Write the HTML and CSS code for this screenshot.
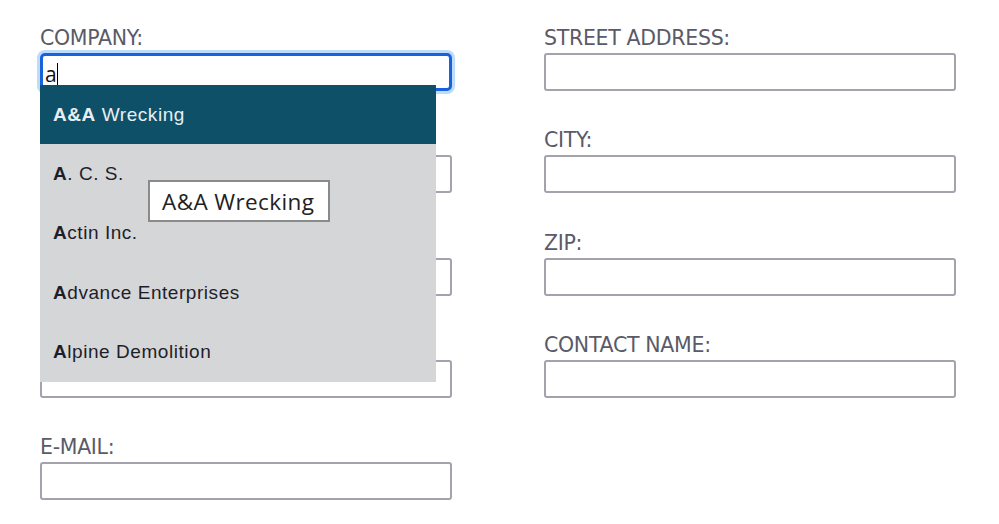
FILE: index.html
```html
<!DOCTYPE html>
<html>
<head>
<meta charset="utf-8">
<link rel="stylesheet" href="styles.css">
</head>
<body>
<form class="form">
  <div class="col">
    <div class="field company">
      <label class="label">COMPANY:</label>
      <div class="input focused"><span class="typed">a</span><span class="caret"></span></div>
      <ul class="menu">
        <li class="item active"><span><b>A&amp;A</b> Wrecking</span></li>
        <li class="item"><span><b>A</b>. C. S.</span></li>
        <li class="item"><span><b>A</b>ctin Inc.</span></li>
        <li class="item"><span><b>A</b>dvance Enterprises</span></li>
        <li class="item"><span><b>A</b>lpine Demolition</span></li>
      </ul>
      <div class="tooltip">A&amp;A Wrecking</div>
    </div>
    <div class="field"><span class="label"></span><div class="input"></div></div>
    <div class="field"><span class="label"></span><div class="input"></div></div>
    <div class="field"><span class="label"></span><div class="input"></div></div>
    <div class="field"><label class="label">E-MAIL:</label><div class="input"></div></div>
  </div>
  <div class="col">
    <div class="field"><label class="label">STREET ADDRESS:</label><div class="input"></div></div>
    <div class="field"><label class="label">CITY:</label><div class="input"></div></div>
    <div class="field"><label class="label">ZIP:</label><div class="input"></div></div>
    <div class="field"><label class="label">CONTACT NAME:</label><div class="input"></div></div>
  </div>
</form>
</body>
</html>
```
FILE: styles.css
```css
html, body { margin: 0; padding: 0; background: #fff; }
body { width: 999px; height: 524px; overflow: hidden; }
.form {
  display: flex;
  gap: 92px;
  padding: 26px 0 0 40px;
}
.col { width: 412px; display: flex; flex-direction: column; gap: 37.3px; }
.field { position: relative; display: flex; flex-direction: column; }
.label {
  font-family: "DejaVu Sans", sans-serif;
  font-size: 20.5px;
  letter-spacing: -0.3px;
  line-height: 24px;
  color: #5a5a68;
  height: 27px;
  display: block;
}
.input {
  box-sizing: border-box;
  height: 38px;
  border: 2px solid #a3a2ad;
  border-radius: 3px;
  background: #fff;
  display: flex;
  align-items: center;
  padding-left: 3px;
}
.input.focused {
  border: 3px solid #1a62dc;
  box-shadow: 0 0 0 3px #bcdcfa;
  border-radius: 5px;
  padding-left: 2px;
}
.typed {
  font-family: "Open Sans", sans-serif;
  font-size: 21px;
  color: #111;
  line-height: 26px;
  margin-top: 3px;
}
.caret { width: 1px; height: 24px; background: #000; margin-top: 5px; }
.menu {
  position: absolute;
  left: 0; top: 59px;
  width: 396px;
  margin: 0; padding: 0;
  list-style: none;
  background: #d5d6d8;
  z-index: 2;
}
.item {
  height: 59.4px;
  display: flex;
  align-items: center;
  padding-left: 13px;
  font-family: "Liberation Sans", Arial, sans-serif;
  font-size: 19px;
  letter-spacing: 0.55px;
  color: #1e1e2a;
}
.item b { font-weight: bold; }
.item.active { background: #0f5069; color: #e8eef2; }
.tooltip {
  position: absolute;
  left: 108px; top: 154px;
  z-index: 3;
  box-sizing: border-box;
  height: 42px;
  width: 182px;
  border: 2px solid #8a8a8a;
  background: #fff;
  font-family: "Open Sans", "DejaVu Sans", sans-serif;
  font-size: 22.5px;
  letter-spacing: 0.4px;
  color: #222;
  display: flex; align-items: center;
  padding-left: 12px;
}
```
